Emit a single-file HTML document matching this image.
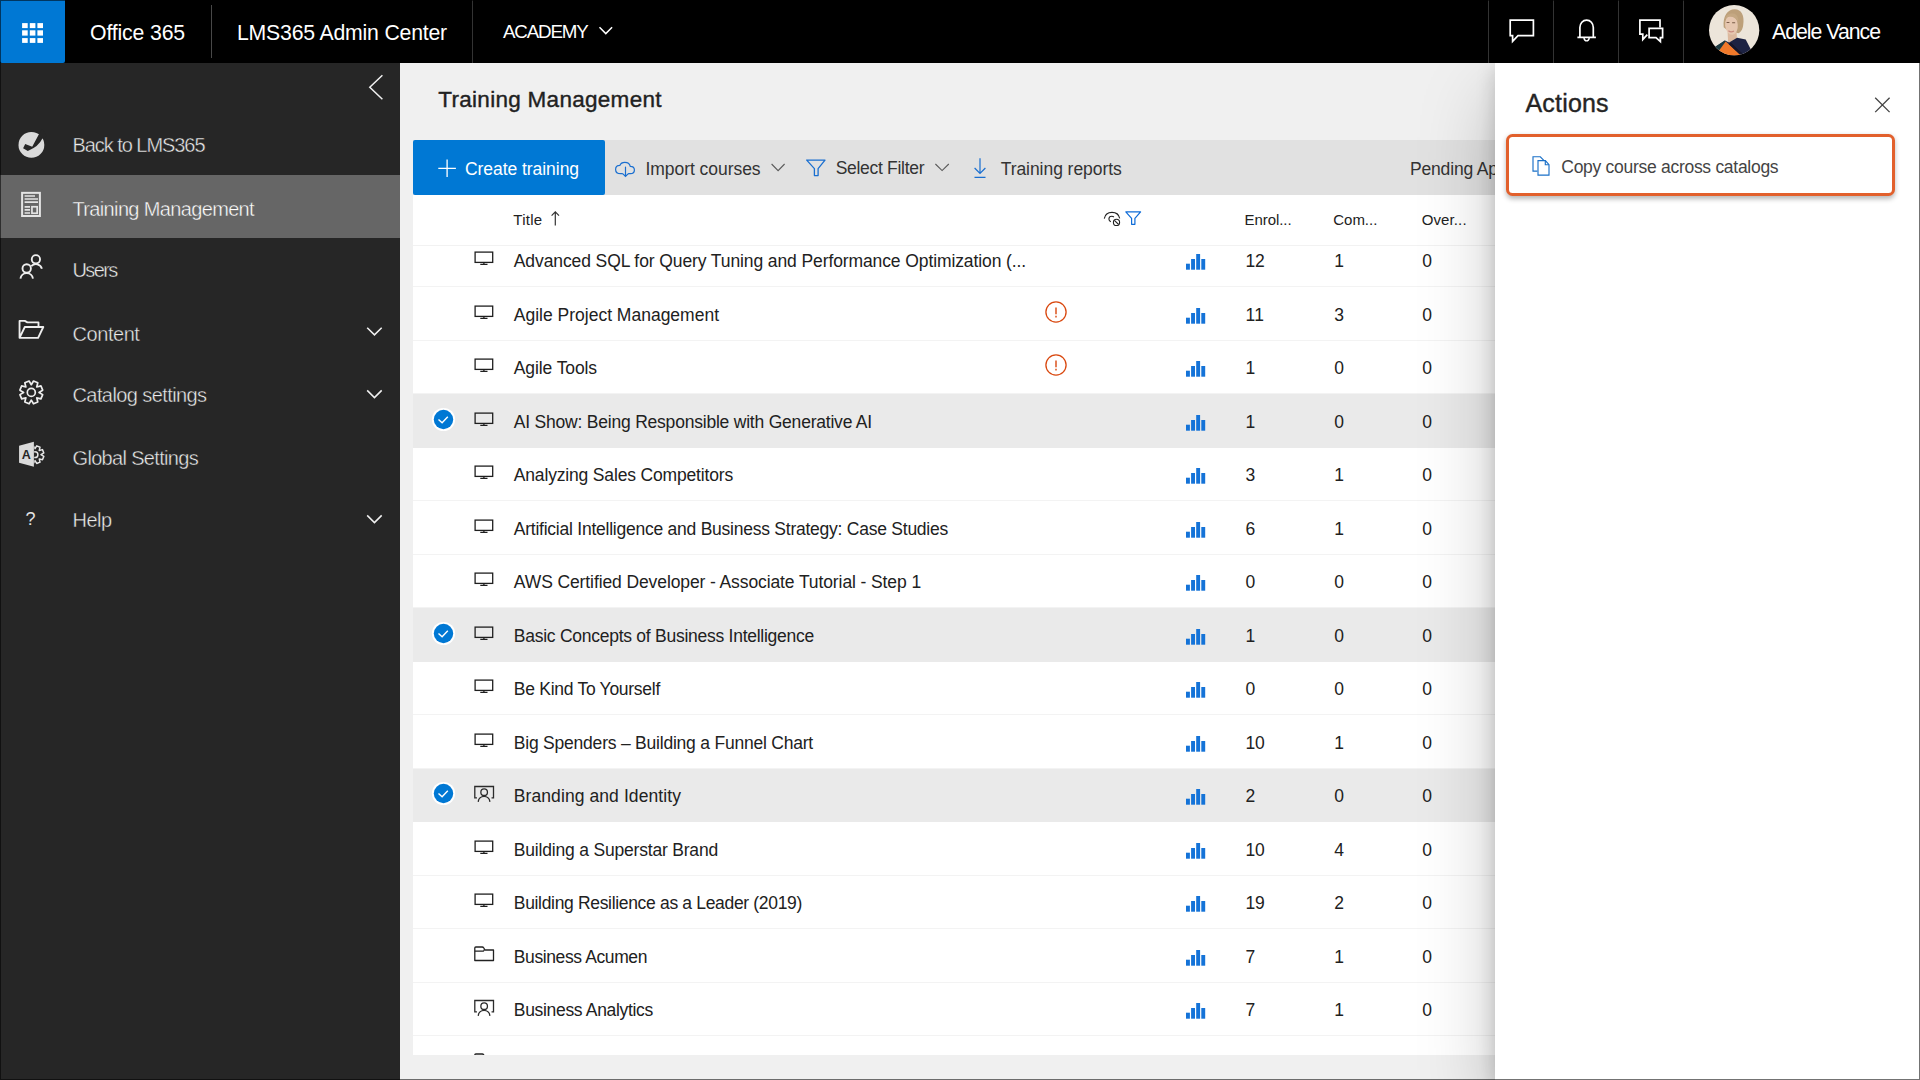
<!DOCTYPE html>
<html lang="en"><head><meta charset="utf-8"><title>LMS365 Admin Center - Training Management</title>
<style>
*{box-sizing:border-box;margin:0;padding:0}
html,body{width:1920px;height:1080px;overflow:hidden;background:#f0f0f0;font-family:"Liberation Sans",sans-serif}
.abs,.t,svg.ic,.row,.ric,.bar,.chk,.wrn{position:absolute}
.t{white-space:nowrap;z-index:5}
.t.p{z-index:30}
#top{position:absolute;left:0;top:0;width:1920px;height:62.5px;background:#000;z-index:20}
#waffle{position:absolute;left:0;top:0;width:65px;height:62.5px;background:#0078d4;border-radius:0 0 2px 2px}
.vd{position:absolute;top:0;width:1.25px;height:62.5px;background:#333}
.vd2{position:absolute;top:5px;width:1.25px;height:52.5px;background:#484848}
#side{position:absolute;left:0;top:62.5px;width:400px;height:1017.5px;background:#262626;z-index:4}
#side .act{position:absolute;left:0;top:112.5px;width:400px;height:62.5px;background:#666}
#title{position:absolute}
#tool{position:absolute;left:413px;top:140px;width:1507px;height:54.5px;background:#e1e1e1}
#create{position:absolute;left:0;top:0;width:191.5px;height:54.5px;background:#0078d4;border-radius:2px}
#tbl{position:absolute;left:413px;top:194.5px;width:1507px;height:860.5px;background:#fff;overflow:hidden}
#hdr{position:absolute;left:0;top:0;width:1507px;height:51.5px;background:#fff;border-bottom:1.25px solid #f2f2f2;z-index:3}
.row{left:0;width:1507px;height:53.5px;border-bottom:1px solid #f3f3f3;background:#fff}
.row.sel{background:#eaeaea;border-bottom-color:#eaeaea}
.ric{left:60.75px}
.bar{left:772px}
.chk{left:19px}
.wrn{left:631.1px}
#panel{position:absolute;left:1495px;top:62.5px;width:425px;height:1017.5px;background:#fff;z-index:12;box-shadow:0 32px 72px 0 rgba(0,0,0,.22),0 6px 18px 0 rgba(0,0,0,.18)}
#copybox{position:absolute;left:11.25px;top:71.75px;width:388.75px;height:62px;border:3px solid #e2602c;border-radius:6.5px;background:#fff;box-shadow:0 2.5px 5px rgba(0,0,0,0.28)}
#frame{position:absolute;left:0;top:0;width:1920px;height:1080px;border:1px solid rgba(0,0,0,0.55);z-index:100;pointer-events:none}
svg{overflow:visible}

</style></head>
<body>
<svg width="0" height="0" style="position:absolute">
<defs>
<symbol id="i-mon" viewBox="0 0 22 20" overflow="visible"><g fill="none" stroke="#1f1f1f" stroke-width="1.3"><rect x="1.1" y="3.1" width="17.6" height="10.3"/><path d="M9.9 13.4V15.3M6.3 15.4H13.5"/></g></symbol>
<symbol id="i-per" viewBox="0 0 22 20" overflow="visible"><g fill="none" stroke="#2b2b2b" stroke-width="1.3"><path d="M2.95 13.8H0.8V2.5H19.5V13.8H17.55"/><circle cx="10.15" cy="8.15" r="3.3"/><path d="M4.25 17.45A5.85 5.85 0 0 1 15.85 17.45" stroke-linecap="round"/></g></symbol>
<symbol id="i-fol" viewBox="0 0 22 20" overflow="visible"><g fill="none" stroke="#222" stroke-width="1.3" stroke-linejoin="round"><path d="M0.8 15.5V3Q0.8 2 1.8 2H8.2Q9.2 2 9.8 3L11 5H19.5V15.5Z"/><path d="M0.8 6.2H8.4Q9.4 6.2 10 5.3L10.4 4.6"/></g></symbol>
<symbol id="i-bar" viewBox="0 0 20 18" overflow="visible"><g fill="#1473d8"><rect x="1" y="11.7" width="3.9" height="6"/><rect x="6.1" y="7" width="3.9" height="10.7"/><rect x="11.2" y="2" width="3.9" height="15.7"/><rect x="16.3" y="7" width="3.9" height="10.7"/></g></symbol>
<symbol id="i-chk" viewBox="0 0 23 23" overflow="visible"><circle cx="11.5" cy="11.5" r="11.6" fill="#fff"/><circle cx="11.5" cy="11.5" r="9.7" fill="#0078d4"/><path d="M6.5 11.6L10.1 14.8L15.8 8.7" fill="none" stroke="#fff" stroke-width="1.4"/></symbol>
<symbol id="i-wrn" viewBox="0 0 24 24" overflow="visible"><circle cx="12" cy="12" r="10.1" fill="none" stroke="#d9480f" stroke-width="1.3"/><path d="M12 7.4V14.3M12 15.8V17.4" stroke="#d9480f" stroke-width="1.4"/></symbol>
<symbol id="i-chev" viewBox="0 0 16 10" overflow="visible"><path d="M1 1L8 8L15 1" fill="none" stroke="currentColor" stroke-width="1.4"/></symbol>
</defs>
</svg>

<!-- main area -->
<div id="tool"><div id="create"></div></div>
<div id="tbl">
<div class="row" style="top:38.5px;height:54px"></div>
<svg class="ric" style="top:54.25px" width="22" height="20" viewBox="0 0 22 20"><use href="#i-mon"/></svg>
<svg class="bar" style="top:57.2px" width="20" height="18" viewBox="0 0 20 18"><use href="#i-bar"/></svg>
<div class="row" style="top:92.5px;height:54px"></div>
<svg class="ric" style="top:108.25px" width="22" height="20" viewBox="0 0 22 20"><use href="#i-mon"/></svg>
<svg class="bar" style="top:111.2px" width="20" height="18" viewBox="0 0 20 18"><use href="#i-bar"/></svg>
<svg class="wrn" style="top:105.1px" width="24" height="24" viewBox="0 0 24 24"><use href="#i-wrn"/></svg>
<div class="row" style="top:146.5px;height:53px"></div>
<svg class="ric" style="top:161.25px" width="22" height="20" viewBox="0 0 22 20"><use href="#i-mon"/></svg>
<svg class="bar" style="top:164.2px" width="20" height="18" viewBox="0 0 20 18"><use href="#i-bar"/></svg>
<svg class="wrn" style="top:158.1px" width="24" height="24" viewBox="0 0 24 24"><use href="#i-wrn"/></svg>
<div class="row sel" style="top:199.5px;height:54px"></div>
<svg class="ric" style="top:215.25px" width="22" height="20" viewBox="0 0 22 20"><use href="#i-mon"/></svg>
<svg class="bar" style="top:218.2px" width="20" height="18" viewBox="0 0 20 18"><use href="#i-bar"/></svg>
<svg class="chk" style="top:213.75px" width="23" height="23" viewBox="0 0 23 23"><use href="#i-chk"/></svg>
<div class="row" style="top:253.5px;height:53px"></div>
<svg class="ric" style="top:268.25px" width="22" height="20" viewBox="0 0 22 20"><use href="#i-mon"/></svg>
<svg class="bar" style="top:271.2px" width="20" height="18" viewBox="0 0 20 18"><use href="#i-bar"/></svg>
<div class="row" style="top:306.5px;height:54px"></div>
<svg class="ric" style="top:322.25px" width="22" height="20" viewBox="0 0 22 20"><use href="#i-mon"/></svg>
<svg class="bar" style="top:325.2px" width="20" height="18" viewBox="0 0 20 18"><use href="#i-bar"/></svg>
<div class="row" style="top:360.5px;height:53px"></div>
<svg class="ric" style="top:375.25px" width="22" height="20" viewBox="0 0 22 20"><use href="#i-mon"/></svg>
<svg class="bar" style="top:378.2px" width="20" height="18" viewBox="0 0 20 18"><use href="#i-bar"/></svg>
<div class="row sel" style="top:413.5px;height:54px"></div>
<svg class="ric" style="top:429.25px" width="22" height="20" viewBox="0 0 22 20"><use href="#i-mon"/></svg>
<svg class="bar" style="top:432.2px" width="20" height="18" viewBox="0 0 20 18"><use href="#i-bar"/></svg>
<svg class="chk" style="top:427.75px" width="23" height="23" viewBox="0 0 23 23"><use href="#i-chk"/></svg>
<div class="row" style="top:467.5px;height:53px"></div>
<svg class="ric" style="top:482.25px" width="22" height="20" viewBox="0 0 22 20"><use href="#i-mon"/></svg>
<svg class="bar" style="top:485.2px" width="20" height="18" viewBox="0 0 20 18"><use href="#i-bar"/></svg>
<div class="row" style="top:520.5px;height:54px"></div>
<svg class="ric" style="top:536.25px" width="22" height="20" viewBox="0 0 22 20"><use href="#i-mon"/></svg>
<svg class="bar" style="top:539.2px" width="20" height="18" viewBox="0 0 20 18"><use href="#i-bar"/></svg>
<div class="row sel" style="top:574.5px;height:53px"></div>
<svg class="ric" style="top:589.25px" width="22" height="20" viewBox="0 0 22 20"><use href="#i-per"/></svg>
<svg class="bar" style="top:592.2px" width="20" height="18" viewBox="0 0 20 18"><use href="#i-bar"/></svg>
<svg class="chk" style="top:587.75px" width="23" height="23" viewBox="0 0 23 23"><use href="#i-chk"/></svg>
<div class="row" style="top:627.5px;height:54px"></div>
<svg class="ric" style="top:643.25px" width="22" height="20" viewBox="0 0 22 20"><use href="#i-mon"/></svg>
<svg class="bar" style="top:646.2px" width="20" height="18" viewBox="0 0 20 18"><use href="#i-bar"/></svg>
<div class="row" style="top:681.5px;height:53px"></div>
<svg class="ric" style="top:696.25px" width="22" height="20" viewBox="0 0 22 20"><use href="#i-mon"/></svg>
<svg class="bar" style="top:699.2px" width="20" height="18" viewBox="0 0 20 18"><use href="#i-bar"/></svg>
<div class="row" style="top:734.5px;height:54px"></div>
<svg class="ric" style="top:750.25px" width="22" height="20" viewBox="0 0 22 20"><use href="#i-fol"/></svg>
<svg class="bar" style="top:753.2px" width="20" height="18" viewBox="0 0 20 18"><use href="#i-bar"/></svg>
<div class="row" style="top:788.5px;height:53px"></div>
<svg class="ric" style="top:803.25px" width="22" height="20" viewBox="0 0 22 20"><use href="#i-per"/></svg>
<svg class="bar" style="top:806.2px" width="20" height="18" viewBox="0 0 20 18"><use href="#i-bar"/></svg>
<div class="row" style="top:841.5px"></div>
<svg class="ric" style="top:857.25px" width="22" height="20" viewBox="0 0 22 20"><use href="#i-fol"/></svg>
<div id="hdr"></div>
</div>

<!-- toolbar / header icons (page coords) -->
<svg class="abs" style="left:0;top:0;z-index:6" width="1920" height="1080" viewBox="0 0 1920 1080">
 <!-- plus -->
 <path d="M438.3 168.3H455.9M447.1 159.5V177.1" stroke="#fff" stroke-width="1.3" fill="none"/>
 <!-- cloud download -->
 <g fill="none" stroke="#1a6fd0" stroke-width="1.2" stroke-linecap="round">
  <path d="M622.3 173.7H620.8C617.5 173.7 615.6 171.7 615.6 169.4C615.6 167.1 617.4 165.4 619.8 165.4C620.6 163.5 622.6 162.4 624.8 162.4C627.6 162.4 629.7 164 630.3 166.3C632.8 166.3 634.4 167.9 634.4 170C634.4 172.2 632.8 173.7 630.4 173.7H628.6"/>
  <path d="M625.5 167.2V176.3M622.9 173.9L625.5 176.5L628.1 173.9"/>
 </g>
 <path d="M771.6 164L778.1 170.6L784.6 164" fill="none" stroke="#5a5a5a" stroke-width="1.1"/>
 <!-- filter big -->
 <path d="M806.7 160.1H825L818.1 168.6V175.6H814.4V168.6Z" fill="none" stroke="#1a6fd0" stroke-width="1.3" stroke-linejoin="round"/>
 <path d="M935.4 164L942.1 170.6L948.8 164" fill="none" stroke="#5a5a5a" stroke-width="1.1"/>
 <!-- download arrow -->
 <g fill="none" stroke="#1a6fd0" stroke-width="1.2"><path d="M980 158.3V173.3M974.6 168L980 173.4L985.4 168M974.5 177.3H985.5"/></g>
 <!-- sort arrow -->
 <path d="M555.3 225.5V212M551.6 215.6L555.3 211.9L559 215.6" fill="none" stroke="#333" stroke-width="1.2"/>
 <!-- eye hidden -->
 <g fill="none" stroke="#222" stroke-width="1.1">
  <path d="M1104.3 218.6C1105 214.6 1108.3 212.4 1112 212.4C1115.7 212.4 1118.9 214.6 1119.7 218.4"/>
  <path d="M1113.9 217C1113.2 216.4 1112.5 216.2 1111.8 216.2C1110.2 216.2 1108.9 217.5 1108.9 219.1C1108.9 220.4 1109.7 221.4 1110.9 221.8"/>
  <circle cx="1116.5" cy="222.4" r="3.1"/><path d="M1114.4 220.3L1118.6 224.5"/>
 </g>
 <!-- filter small -->
 <path d="M1125.8 211.9H1140.6L1134.9 218.4V224.3H1131.6V218.4Z" fill="none" stroke="#0f6cd8" stroke-width="1.2" stroke-linejoin="round"/>
</svg>


<!-- side nav -->
<div id="side"><div class="act"></div></div>
<svg class="abs" style="left:0;top:0;z-index:6" width="400" height="1080" viewBox="0 0 400 1080">
 <!-- collapse chevron -->
 <path d="M382.4 75.3L369.8 87.3L382.4 99.3" fill="none" stroke="#f0f0f0" stroke-width="1.5"/>
 <!-- lms logo -->
 <circle cx="31.4" cy="144.9" r="12.9" fill="#dadada"/>
 <path d="M25.2 143.9L32.2 146.85L38.9 134.3L42 129L47 136L42.2 138.7Q38.8 146.4 27.8 150.9L23.1 148.3Z" fill="#262626"/>
 <!-- training mgmt icon -->
 <g fill="none" stroke="#e4e4e4">
  <rect x="22.1" y="192.85" width="17.8" height="23.15" stroke-width="2"/>
  <path d="M24.6 196H35M24.6 199H38M24.6 202.1H38M24.6 206.9H30M24.6 209.9H30M24.6 213H30" stroke-width="1.7"/>
  <rect x="31.95" y="206.75" width="5.2" height="6.5" stroke-width="1.7"/>
 </g>
 <!-- users -->
 <g fill="none" stroke="#eeeeee" stroke-width="1.9">
  <circle cx="35.9" cy="259.3" r="4.15"/><path d="M31.3 266.2A6.2 6.2 0 0 1 41.9 268.8"/>
  <circle cx="26.7" cy="268.5" r="4.2"/><path d="M20.45 278.6A6.3 6.3 0 0 1 32.95 278.6"/>
 </g>
 <!-- folder open -->
 <path d="M19.55 337.8V320.9H24.8L27.4 322.4H38.5V327M19.55 337.8L24.8 327H43.3L38.1 337.8Z" fill="none" stroke="#eeeeee" stroke-width="1.85" stroke-linejoin="round"/>
 <!-- gear -->
 <g fill="none" stroke="#eeeeee" stroke-width="1.7" stroke-linejoin="round">
  <circle cx="31.3" cy="392.4" r="4"/>
  <path d="M31.30 384.70L33.51 381.01L37.79 382.78L36.74 386.96L40.92 385.91L42.69 390.19L39.00 392.40L42.69 394.61L40.92 398.89L36.74 397.84L37.79 402.02L33.51 403.79L31.30 400.10L29.09 403.79L24.81 402.02L25.86 397.84L21.68 398.89L19.91 394.61L23.60 392.40L19.91 390.19L21.68 385.91L25.86 386.96L24.81 382.78L29.09 381.01Z"/>
 </g>
 <!-- global settings -->
 <defs><clipPath id="hg"><rect x="34.2" y="440" width="14" height="30"/></clipPath></defs>
 <g clip-path="url(#hg)" fill="none" stroke="#e6e6e6" stroke-width="1.5" stroke-linejoin="round">
  <path d="M35.00 448.65L36.72 445.82L40.03 447.19L39.24 450.41L42.46 449.62L43.83 452.93L41.00 454.65L43.83 456.37L42.46 459.68L39.24 458.89L40.03 462.11L36.72 463.48L35.00 460.65L33.28 463.48L29.97 462.11L30.76 458.89L27.54 459.68L26.17 456.37L29.00 454.65L26.17 452.93L27.54 449.62L30.76 450.41L29.97 447.19L33.28 445.82Z"/>
  <circle cx="35" cy="454.65" r="2.9"/>
 </g>
 <path d="M19.07 445.7L33.9 441.85V466.85L19.07 462.8Z" fill="#dadada"/>
 <text x="26.2" y="458.9" font-family="Liberation Sans, sans-serif" font-weight="700" font-size="12.5" text-anchor="middle" fill="#262626">A</text>
 <!-- chevrons -->
 <g fill="none" stroke="#f0f0f0" stroke-width="1.55">
  <path d="M367.2 327.7L374.45 334.9L381.7 327.7"/>
  <path d="M367.2 390.4L374.45 397.6L381.7 390.4"/>
  <path d="M367.2 515.4L374.45 522.6L381.7 515.4"/>
 </g>
</svg>

<!-- top bar -->
<div id="top">
 <div id="waffle"></div>
 <div class="vd2" style="left:210.6px"></div>
 <div class="vd" style="left:471.5px"></div>
 <div class="vd" style="left:1487.5px"></div>
 <div class="vd" style="left:1553px"></div>
 <div class="vd" style="left:1618px"></div>
 <div class="vd" style="left:1683px"></div>
 <svg class="abs" style="left:0;top:0" width="1920" height="63" viewBox="0 0 1920 63">
  <g fill="#fff">
   <rect x="22.1" y="23.1" width="5.6" height="5"/><rect x="29.8" y="23.1" width="5.6" height="5"/><rect x="37.4" y="23.1" width="5.6" height="5"/>
   <rect x="22.1" y="30.3" width="5.6" height="5.3"/><rect x="29.8" y="30.3" width="5.6" height="5.3"/><rect x="37.4" y="30.3" width="5.6" height="5.3"/>
   <rect x="22.1" y="38.1" width="5.6" height="4.8"/><rect x="29.8" y="38.1" width="5.6" height="4.8"/><rect x="37.4" y="38.1" width="5.6" height="4.8"/>
  </g>
  <path d="M599.5 27.3L605.8 33.6L612.1 27.3" fill="none" stroke="#fff" stroke-width="1.5"/>
  <g fill="none" stroke="#fff" stroke-width="1.7">
   <path d="M1510.2 20.2H1533.4V35.7H1518L1512.6 41.3V35.7H1510.2Z"/>
   <path d="M1577.4 37.4H1595.9M1579.9 37.4V27.6C1579.9 23.3 1582.8 20.1 1586.6 20.1S1593.3 23.3 1593.3 27.6V37.4"/>
   <path d="M1583.9 38C1584.3 39.9 1585.3 40.9 1586.6 40.9S1588.9 39.9 1589.3 38" stroke-width="1.4"/>
   <path d="M1660 27.5V20.2H1639.9V34.2H1642.8V39.5L1647.3 34.6"/>
   <path d="M1649.1 28.4H1662.6V37.7H1660.4V41.6L1656 37.7H1649.1Z"/>
  </g>
 </svg>
 <!-- avatar -->
 <svg class="abs" style="left:1708.9px;top:4.9px" width="50.3" height="50.3" viewBox="0 0 50 50">
  <defs><clipPath id="avc"><circle cx="25" cy="25" r="25"/></clipPath>
  <filter id="avb" x="-10%" y="-10%" width="120%" height="120%"><feGaussianBlur stdDeviation="0.7"/></filter></defs>
  <g clip-path="url(#avc)">
   <rect x="-3" y="-3" width="56" height="56" fill="#ece5da"/>
   <g filter="url(#avb)">
    <path d="M14.6 22C13.6 11 18.5 4.3 25.5 4.3C32.5 4.3 35.5 11 34 20C33.5 24.5 31.5 27.5 29 28.2L17 24Z" fill="#bda07a"/>
    <path d="M18.5 27L27.5 27.5L27.8 34.5L19 38Z" fill="#dcb99e"/>
    <ellipse cx="22.3" cy="20" rx="6.3" ry="9.6" fill="#e6c7b0" transform="rotate(-6 22.3 20)"/>
    <path d="M16 14C17 9.5 21 8 24 8.5C28 9 29.5 13 29 17C27.5 13.5 24 11.5 20.5 11.8C18.5 12 17 13 16 14Z" fill="#c5a883"/>
    <path d="M17.5 17.3H20.3M23 17.6H26" stroke="#7a5c48" stroke-width="1" fill="none"/>
    <path d="M19.3 25.6C20.8 26.8 23.2 26.9 24.8 25.8" stroke="#c98b80" stroke-width="1.1" fill="none"/>
    <path d="M4 43L15.8 35.3L20 37.2L27.9 32.5L36.5 34.2L42.5 46L38 54H8Z" fill="#1d2442"/>
    <path d="M4 43L15.8 35.3L17.5 36.8L9 47Z" fill="#1f3a42"/>
    <path d="M9.5 46L16.6 36.3L19.5 38.8L32 50.5L20 54L10 50Z" fill="#f0792b"/>
    <path d="M19.5 38.8L22 37.5L34 49L32 50.5Z" fill="#15172a"/>
   </g>
  </g>
 </svg>
</div>

<!-- panel -->
<div id="panel"><div id="copybox"></div></div>
<svg class="abs" style="left:0;top:0;z-index:31" width="1920" height="1080" viewBox="0 0 1920 1080">
 <path d="M1875.2 97.7L1889.6 112.1M1889.6 97.7L1875.2 112.1" stroke="#444" stroke-width="1.3" fill="none"/>
 <g fill="none" stroke="#1a70c8" stroke-width="1.15">
  <path d="M1537.4 171.1H1533V156.75H1540.3L1543.6 160.2"/>
  <path d="M1538 160.6H1545.4L1549 164.6V175.1H1538Z" fill="#fff"/>
  <path d="M1545.3 160.8V164.7H1548.9"/>
 </g>
</svg>

<span class="t p" style="left:90.0px;top:19.83px;font-size:21.25px;line-height:27.62px;color:#fff;letter-spacing:-0.148px;">Office 365</span>
<span class="t p" style="left:237.0px;top:19.83px;font-size:21.25px;line-height:27.62px;color:#fff;letter-spacing:-0.201px;">LMS365 Admin Center</span>
<span class="t p" style="left:503.0px;top:19.61px;font-size:18.75px;line-height:24.38px;color:#fff;letter-spacing:-1.176px;">ACADEMY</span>
<span class="t p" style="left:1772.0px;top:18.83px;font-size:21.25px;line-height:27.62px;color:#fff;letter-spacing:-0.994px;">Adele Vance</span>
<span class="t" style="left:72.5px;top:131.57px;font-size:20px;line-height:26.0px;color:#ececec;-webkit-text-stroke:0.4px #262626;letter-spacing:-1.054px;">Back to LMS365</span>
<span class="t" style="left:72.5px;top:195.57px;font-size:20px;line-height:26.0px;color:#ffffff;-webkit-text-stroke:0.4px #666;letter-spacing:-0.648px;">Training Management</span>
<span class="t" style="left:72.5px;top:256.57px;font-size:20px;line-height:26.0px;color:#ececec;-webkit-text-stroke:0.4px #262626;letter-spacing:-1.647px;">Users</span>
<span class="t" style="left:72.5px;top:320.57px;font-size:20px;line-height:26.0px;color:#ececec;-webkit-text-stroke:0.4px #262626;letter-spacing:-0.438px;">Content</span>
<span class="t" style="left:72.5px;top:382.27px;font-size:20px;line-height:26.0px;color:#ececec;-webkit-text-stroke:0.4px #262626;letter-spacing:-0.589px;">Catalog settings</span>
<span class="t" style="left:72.5px;top:445.37px;font-size:20px;line-height:26.0px;color:#ececec;-webkit-text-stroke:0.4px #262626;letter-spacing:-0.676px;">Global Settings</span>
<span class="t" style="left:72.5px;top:506.87px;font-size:20px;line-height:26.0px;color:#ececec;-webkit-text-stroke:0.4px #262626;letter-spacing:-0.535px;">Help</span>
<span class="t" style="left:25.5px;top:508.06px;font-size:18px;line-height:23.4px;color:#e4e4e4;letter-spacing:-1.016px;">?</span>
<span class="t" style="left:438.3px;top:84.58px;font-size:22.5px;line-height:29.25px;color:#212121;-webkit-text-stroke:0.38px currentColor;letter-spacing:0.287px;">Training Management</span>
<span class="t" style="left:465.0px;top:157.56px;font-size:17.5px;line-height:22.75px;color:#fff;letter-spacing:-0.053px;">Create training</span>
<span class="t" style="left:645.5px;top:157.56px;font-size:17.5px;line-height:22.75px;color:#333;letter-spacing:-0.052px;">Import courses</span>
<span class="t" style="left:835.7px;top:156.56px;font-size:17.5px;line-height:22.75px;color:#333;letter-spacing:-0.299px;">Select Filter</span>
<span class="t" style="left:1000.7px;top:157.56px;font-size:17.5px;line-height:22.75px;color:#333;letter-spacing:-0.057px;">Training reports</span>
<span class="t" style="left:1410.0px;top:157.56px;font-size:17.5px;line-height:22.75px;color:#333;letter-spacing:-0.174px;">Pending Approvals</span>
<span class="t" style="left:513.3px;top:209.55px;font-size:15px;line-height:19.5px;color:#212121;letter-spacing:0.244px;">Title</span>
<span class="t" style="left:1244.5px;top:210.05px;font-size:15px;line-height:19.5px;color:#212121;letter-spacing:-0.066px;">Enrol...</span>
<span class="t" style="left:1333.3px;top:210.05px;font-size:15px;line-height:19.5px;color:#212121;letter-spacing:-0.031px;">Com...</span>
<span class="t" style="left:1421.7px;top:210.05px;font-size:15px;line-height:19.5px;color:#212121;letter-spacing:0.116px;">Over...</span>
<span class="t" style="left:513.8px;top:250.26px;font-size:17.5px;line-height:22.75px;color:#212121;letter-spacing:-0.104px;">Advanced SQL for Query Tuning and Performance Optimization (...</span>
<span class="t" style="left:1245.5px;top:250.26px;font-size:17.5px;line-height:22.75px;color:#212121;letter-spacing:-0.304px;">12</span>
<span class="t" style="left:1334.2px;top:250.26px;font-size:17.5px;line-height:22.75px;color:#212121;letter-spacing:-0.304px;">1</span>
<span class="t" style="left:1422.3px;top:250.26px;font-size:17.5px;line-height:22.75px;color:#212121;letter-spacing:-0.304px;">0</span>
<span class="t" style="left:513.8px;top:304.26px;font-size:17.5px;line-height:22.75px;color:#212121;letter-spacing:-0.002px;">Agile Project Management</span>
<span class="t" style="left:1245.5px;top:304.26px;font-size:17.5px;line-height:22.75px;color:#212121;letter-spacing:0.344px;">11</span>
<span class="t" style="left:1334.2px;top:304.26px;font-size:17.5px;line-height:22.75px;color:#212121;letter-spacing:-0.304px;">3</span>
<span class="t" style="left:1422.3px;top:304.26px;font-size:17.5px;line-height:22.75px;color:#212121;letter-spacing:-0.304px;">0</span>
<span class="t" style="left:513.8px;top:357.26px;font-size:17.5px;line-height:22.75px;color:#212121;letter-spacing:-0.103px;">Agile Tools</span>
<span class="t" style="left:1245.5px;top:357.26px;font-size:17.5px;line-height:22.75px;color:#212121;letter-spacing:-0.304px;">1</span>
<span class="t" style="left:1334.2px;top:357.26px;font-size:17.5px;line-height:22.75px;color:#212121;letter-spacing:-0.304px;">0</span>
<span class="t" style="left:1422.3px;top:357.26px;font-size:17.5px;line-height:22.75px;color:#212121;letter-spacing:-0.304px;">0</span>
<span class="t" style="left:513.8px;top:411.26px;font-size:17.5px;line-height:22.75px;color:#212121;letter-spacing:-0.212px;">AI Show: Being Responsible with Generative AI</span>
<span class="t" style="left:1245.5px;top:411.26px;font-size:17.5px;line-height:22.75px;color:#212121;letter-spacing:-0.304px;">1</span>
<span class="t" style="left:1334.2px;top:411.26px;font-size:17.5px;line-height:22.75px;color:#212121;letter-spacing:-0.304px;">0</span>
<span class="t" style="left:1422.3px;top:411.26px;font-size:17.5px;line-height:22.75px;color:#212121;letter-spacing:-0.304px;">0</span>
<span class="t" style="left:513.8px;top:464.26px;font-size:17.5px;line-height:22.75px;color:#212121;letter-spacing:-0.167px;">Analyzing Sales Competitors</span>
<span class="t" style="left:1245.5px;top:464.26px;font-size:17.5px;line-height:22.75px;color:#212121;letter-spacing:-0.304px;">3</span>
<span class="t" style="left:1334.2px;top:464.26px;font-size:17.5px;line-height:22.75px;color:#212121;letter-spacing:-0.304px;">1</span>
<span class="t" style="left:1422.3px;top:464.26px;font-size:17.5px;line-height:22.75px;color:#212121;letter-spacing:-0.304px;">0</span>
<span class="t" style="left:513.8px;top:518.26px;font-size:17.5px;line-height:22.75px;color:#212121;letter-spacing:-0.241px;">Artificial Intelligence and Business Strategy: Case Studies</span>
<span class="t" style="left:1245.5px;top:518.26px;font-size:17.5px;line-height:22.75px;color:#212121;letter-spacing:-0.304px;">6</span>
<span class="t" style="left:1334.2px;top:518.26px;font-size:17.5px;line-height:22.75px;color:#212121;letter-spacing:-0.304px;">1</span>
<span class="t" style="left:1422.3px;top:518.26px;font-size:17.5px;line-height:22.75px;color:#212121;letter-spacing:-0.304px;">0</span>
<span class="t" style="left:513.8px;top:571.26px;font-size:17.5px;line-height:22.75px;color:#212121;letter-spacing:-0.104px;">AWS Certified Developer - Associate Tutorial - Step 1</span>
<span class="t" style="left:1245.5px;top:571.26px;font-size:17.5px;line-height:22.75px;color:#212121;letter-spacing:-0.304px;">0</span>
<span class="t" style="left:1334.2px;top:571.26px;font-size:17.5px;line-height:22.75px;color:#212121;letter-spacing:-0.304px;">0</span>
<span class="t" style="left:1422.3px;top:571.26px;font-size:17.5px;line-height:22.75px;color:#212121;letter-spacing:-0.304px;">0</span>
<span class="t" style="left:513.8px;top:625.26px;font-size:17.5px;line-height:22.75px;color:#212121;letter-spacing:-0.259px;">Basic Concepts of Business Intelligence</span>
<span class="t" style="left:1245.5px;top:625.26px;font-size:17.5px;line-height:22.75px;color:#212121;letter-spacing:-0.304px;">1</span>
<span class="t" style="left:1334.2px;top:625.26px;font-size:17.5px;line-height:22.75px;color:#212121;letter-spacing:-0.304px;">0</span>
<span class="t" style="left:1422.3px;top:625.26px;font-size:17.5px;line-height:22.75px;color:#212121;letter-spacing:-0.304px;">0</span>
<span class="t" style="left:513.8px;top:678.26px;font-size:17.5px;line-height:22.75px;color:#212121;letter-spacing:-0.277px;">Be Kind To Yourself</span>
<span class="t" style="left:1245.5px;top:678.26px;font-size:17.5px;line-height:22.75px;color:#212121;letter-spacing:-0.304px;">0</span>
<span class="t" style="left:1334.2px;top:678.26px;font-size:17.5px;line-height:22.75px;color:#212121;letter-spacing:-0.304px;">0</span>
<span class="t" style="left:1422.3px;top:678.26px;font-size:17.5px;line-height:22.75px;color:#212121;letter-spacing:-0.304px;">0</span>
<span class="t" style="left:513.8px;top:732.26px;font-size:17.5px;line-height:22.75px;color:#212121;letter-spacing:-0.216px;">Big Spenders – Building a Funnel Chart</span>
<span class="t" style="left:1245.5px;top:732.26px;font-size:17.5px;line-height:22.75px;color:#212121;letter-spacing:-0.304px;">10</span>
<span class="t" style="left:1334.2px;top:732.26px;font-size:17.5px;line-height:22.75px;color:#212121;letter-spacing:-0.304px;">1</span>
<span class="t" style="left:1422.3px;top:732.26px;font-size:17.5px;line-height:22.75px;color:#212121;letter-spacing:-0.304px;">0</span>
<span class="t" style="left:513.8px;top:785.26px;font-size:17.5px;line-height:22.75px;color:#212121;letter-spacing:0.085px;">Branding and Identity</span>
<span class="t" style="left:1245.5px;top:785.26px;font-size:17.5px;line-height:22.75px;color:#212121;letter-spacing:-0.304px;">2</span>
<span class="t" style="left:1334.2px;top:785.26px;font-size:17.5px;line-height:22.75px;color:#212121;letter-spacing:-0.304px;">0</span>
<span class="t" style="left:1422.3px;top:785.26px;font-size:17.5px;line-height:22.75px;color:#212121;letter-spacing:-0.304px;">0</span>
<span class="t" style="left:513.8px;top:839.26px;font-size:17.5px;line-height:22.75px;color:#212121;letter-spacing:-0.191px;">Building a Superstar Brand</span>
<span class="t" style="left:1245.5px;top:839.26px;font-size:17.5px;line-height:22.75px;color:#212121;letter-spacing:-0.304px;">10</span>
<span class="t" style="left:1334.2px;top:839.26px;font-size:17.5px;line-height:22.75px;color:#212121;letter-spacing:-0.304px;">4</span>
<span class="t" style="left:1422.3px;top:839.26px;font-size:17.5px;line-height:22.75px;color:#212121;letter-spacing:-0.304px;">0</span>
<span class="t" style="left:513.8px;top:892.26px;font-size:17.5px;line-height:22.75px;color:#212121;letter-spacing:-0.327px;">Building Resilience as a Leader (2019)</span>
<span class="t" style="left:1245.5px;top:892.26px;font-size:17.5px;line-height:22.75px;color:#212121;letter-spacing:-0.304px;">19</span>
<span class="t" style="left:1334.2px;top:892.26px;font-size:17.5px;line-height:22.75px;color:#212121;letter-spacing:-0.304px;">2</span>
<span class="t" style="left:1422.3px;top:892.26px;font-size:17.5px;line-height:22.75px;color:#212121;letter-spacing:-0.304px;">0</span>
<span class="t" style="left:513.8px;top:946.26px;font-size:17.5px;line-height:22.75px;color:#212121;letter-spacing:-0.394px;">Business Acumen</span>
<span class="t" style="left:1245.5px;top:946.26px;font-size:17.5px;line-height:22.75px;color:#212121;letter-spacing:-0.304px;">7</span>
<span class="t" style="left:1334.2px;top:946.26px;font-size:17.5px;line-height:22.75px;color:#212121;letter-spacing:-0.304px;">1</span>
<span class="t" style="left:1422.3px;top:946.26px;font-size:17.5px;line-height:22.75px;color:#212121;letter-spacing:-0.304px;">0</span>
<span class="t" style="left:513.8px;top:999.26px;font-size:17.5px;line-height:22.75px;color:#212121;letter-spacing:-0.319px;">Business Analytics</span>
<span class="t" style="left:1245.5px;top:999.26px;font-size:17.5px;line-height:22.75px;color:#212121;letter-spacing:-0.304px;">7</span>
<span class="t" style="left:1334.2px;top:999.26px;font-size:17.5px;line-height:22.75px;color:#212121;letter-spacing:-0.304px;">1</span>
<span class="t" style="left:1422.3px;top:999.26px;font-size:17.5px;line-height:22.75px;color:#212121;letter-spacing:-0.304px;">0</span>
<span class="t p" style="left:1525.5px;top:87.29px;font-size:25px;line-height:32.5px;color:#252525;-webkit-text-stroke:0.38px currentColor;letter-spacing:0.188px;">Actions</span>
<span class="t p" style="left:1561.3px;top:156.16px;font-size:17.5px;line-height:22.75px;color:#444;letter-spacing:-0.285px;">Copy course across catalogs</span>
<div id="frame"></div>

</body></html>
